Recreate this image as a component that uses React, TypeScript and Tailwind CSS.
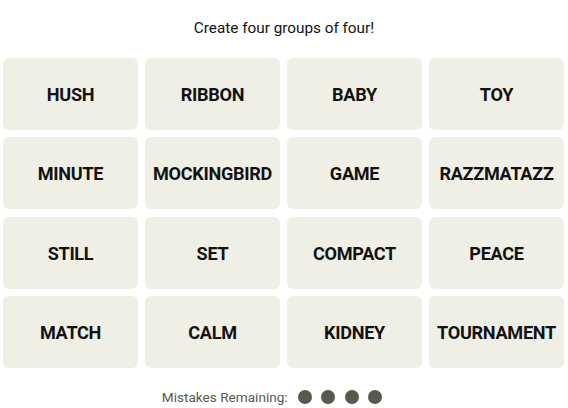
const words = [
  "HUSH", "RIBBON", "BABY", "TOY",
  "MINUTE", "MOCKINGBIRD", "GAME", "RAZZMATAZZ",
  "STILL", "SET", "COMPACT", "PEACE",
  "MATCH", "CALM", "KIDNEY", "TOURNAMENT",
];

const App = () => {
  return (
    <div className="w-[568px] h-[408px] bg-white flex flex-col items-center" style={{ fontFamily: "Roboto, 'Liberation Sans', sans-serif" }}>
      <p className="mt-[18px] text-[15.3px] leading-[20px] text-[#121212]">Create four groups of four!</p>
      <div className="mt-[20px] ml-[-1px] grid grid-cols-[repeat(4,135px)] auto-rows-[72px] gap-x-[7px] gap-y-[7.33px]">
        {words.map((w) => (
          <div key={w} className="bg-[#efefe6] rounded-[6px] flex items-center justify-center pt-[1px]">
            <span className="font-bold text-[18.1px] text-[#121212] tracking-[-0.3px]">{w}</span>
          </div>
        ))}
      </div>
      <div className="mt-[19px] mr-[24px] flex items-center gap-[10px]">
        <span className="text-[13.6px] text-[#5a594e]">Mistakes Remaining:</span>
        <div className="flex gap-[9.5px]">
          <span className="w-[14px] h-[14px] rounded-full bg-[#5a594e]" />
          <span className="w-[14px] h-[14px] rounded-full bg-[#5a594e]" />
          <span className="w-[14px] h-[14px] rounded-full bg-[#5a594e]" />
          <span className="w-[14px] h-[14px] rounded-full bg-[#5a594e]" />
        </div>
      </div>
    </div>
  );
};

export default App;
